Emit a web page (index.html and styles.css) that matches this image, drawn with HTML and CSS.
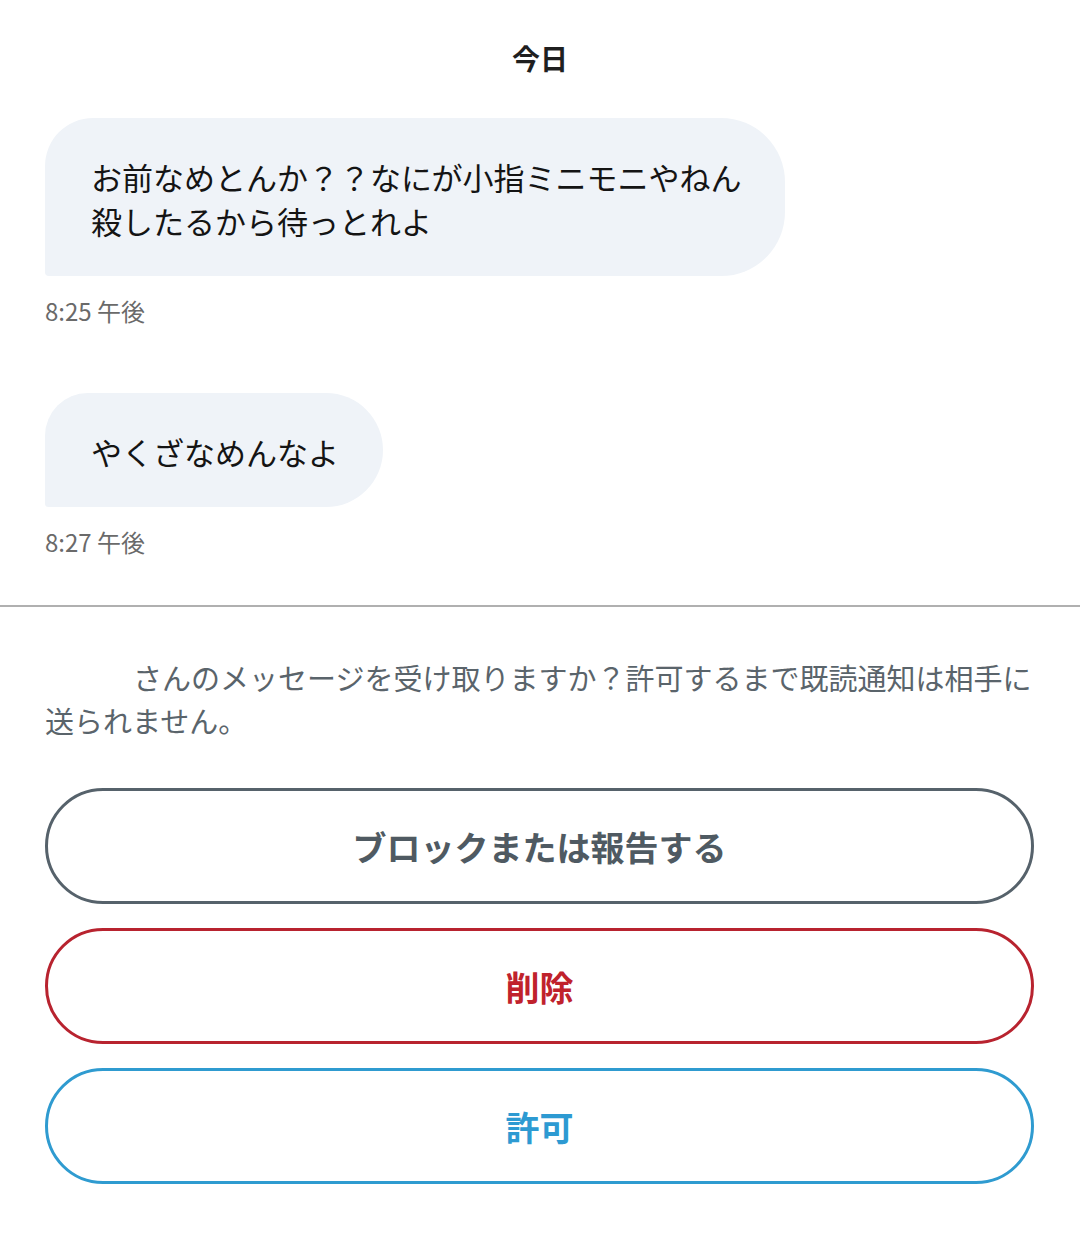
FILE: index.html
```html
<!DOCTYPE html>
<html lang="ja">
<head>
  <meta charset="UTF-8" />
  <meta name="viewport" content="width=device-width, initial-scale=1.0" />
  <title>メッセージリクエスト</title>
  <link rel="stylesheet" href="styles.css">
</head>
<body>

  <div class="chat">
    <div class="day-label">今日</div>

    <div class="message">
      <div class="bubble">お前なめとんか？？なにが小指ミニモニやねん<br>殺したるから待っとれよ</div>
      <div class="time">8:25 午後</div>
    </div>

    <div class="message">
      <div class="bubble">やくざなめんなよ</div>
      <div class="time">8:27 午後</div>
    </div>
  </div>

  <div class="request">
    <p class="request-text"><span class="sender"></span>さんのメッセージを受け取りますか？許可するまで既読通知は相手に送られません。</p>

    <div class="actions">
      <button class="btn btn-block">ブロックまたは報告する</button>
      <button class="btn btn-delete">削除</button>
      <button class="btn btn-accept">許可</button>
    </div>
  </div>

</body>
</html>
```

FILE: styles.css
```css
body {
  margin: 0;
  background: #ffffff;
  color: #141414;
  font-family: "Noto Sans CJK JP", "Noto Sans", sans-serif;
  width: 1080px;
}

/* Conversation */
.chat {
  padding: 38px 45px 47px 45px;
  border-bottom: 2px solid #b0b0b0;
}

.day-label {
  text-align: center;
  font-size: 28px;
  font-weight: 700;
  line-height: 40px;
  color: #1f1f1f;
  margin-bottom: 40px;
}

.message {
  display: flex;
  flex-direction: column;
  align-items: flex-start;
}

.message + .message {
  margin-top: 66px;
}

.bubble {
  background-color: #eff3f8;
  font-size: 31px;
  line-height: 44px;
  padding: 37px 44px 33px 46px;
  border-radius: 48px 64px 64px 4px;
  white-space: nowrap;
}

.time {
  margin-top: 19px;
  font-size: 24px;
  line-height: 32px;
  color: #6a6a6a;
}

/* Message request */
.request {
  padding: 49px 46px 0 45px;
}

.request-text {
  margin: 0 0 46px;
  font-size: 29px;
  line-height: 43px;
  color: #5a646b;
}

.sender {
  display: inline-block;
  width: 88px;
}

.actions {
  display: flex;
  flex-direction: column;
  gap: 24px;
}

.btn {
  height: 116px;
  border-radius: 58px;
  border: 3px solid;
  background: #ffffff;
  font-family: inherit;
  font-size: 34px;
  font-weight: 700;
  cursor: pointer;
}

.btn-block {
  border-color: #56626b;
  color: #4f5a62;
}

.btn-delete {
  border-color: #b8232f;
  color: #c0222c;
}

.btn-accept {
  border-color: #2f9bd0;
  color: #2d9ad2;
}
```
